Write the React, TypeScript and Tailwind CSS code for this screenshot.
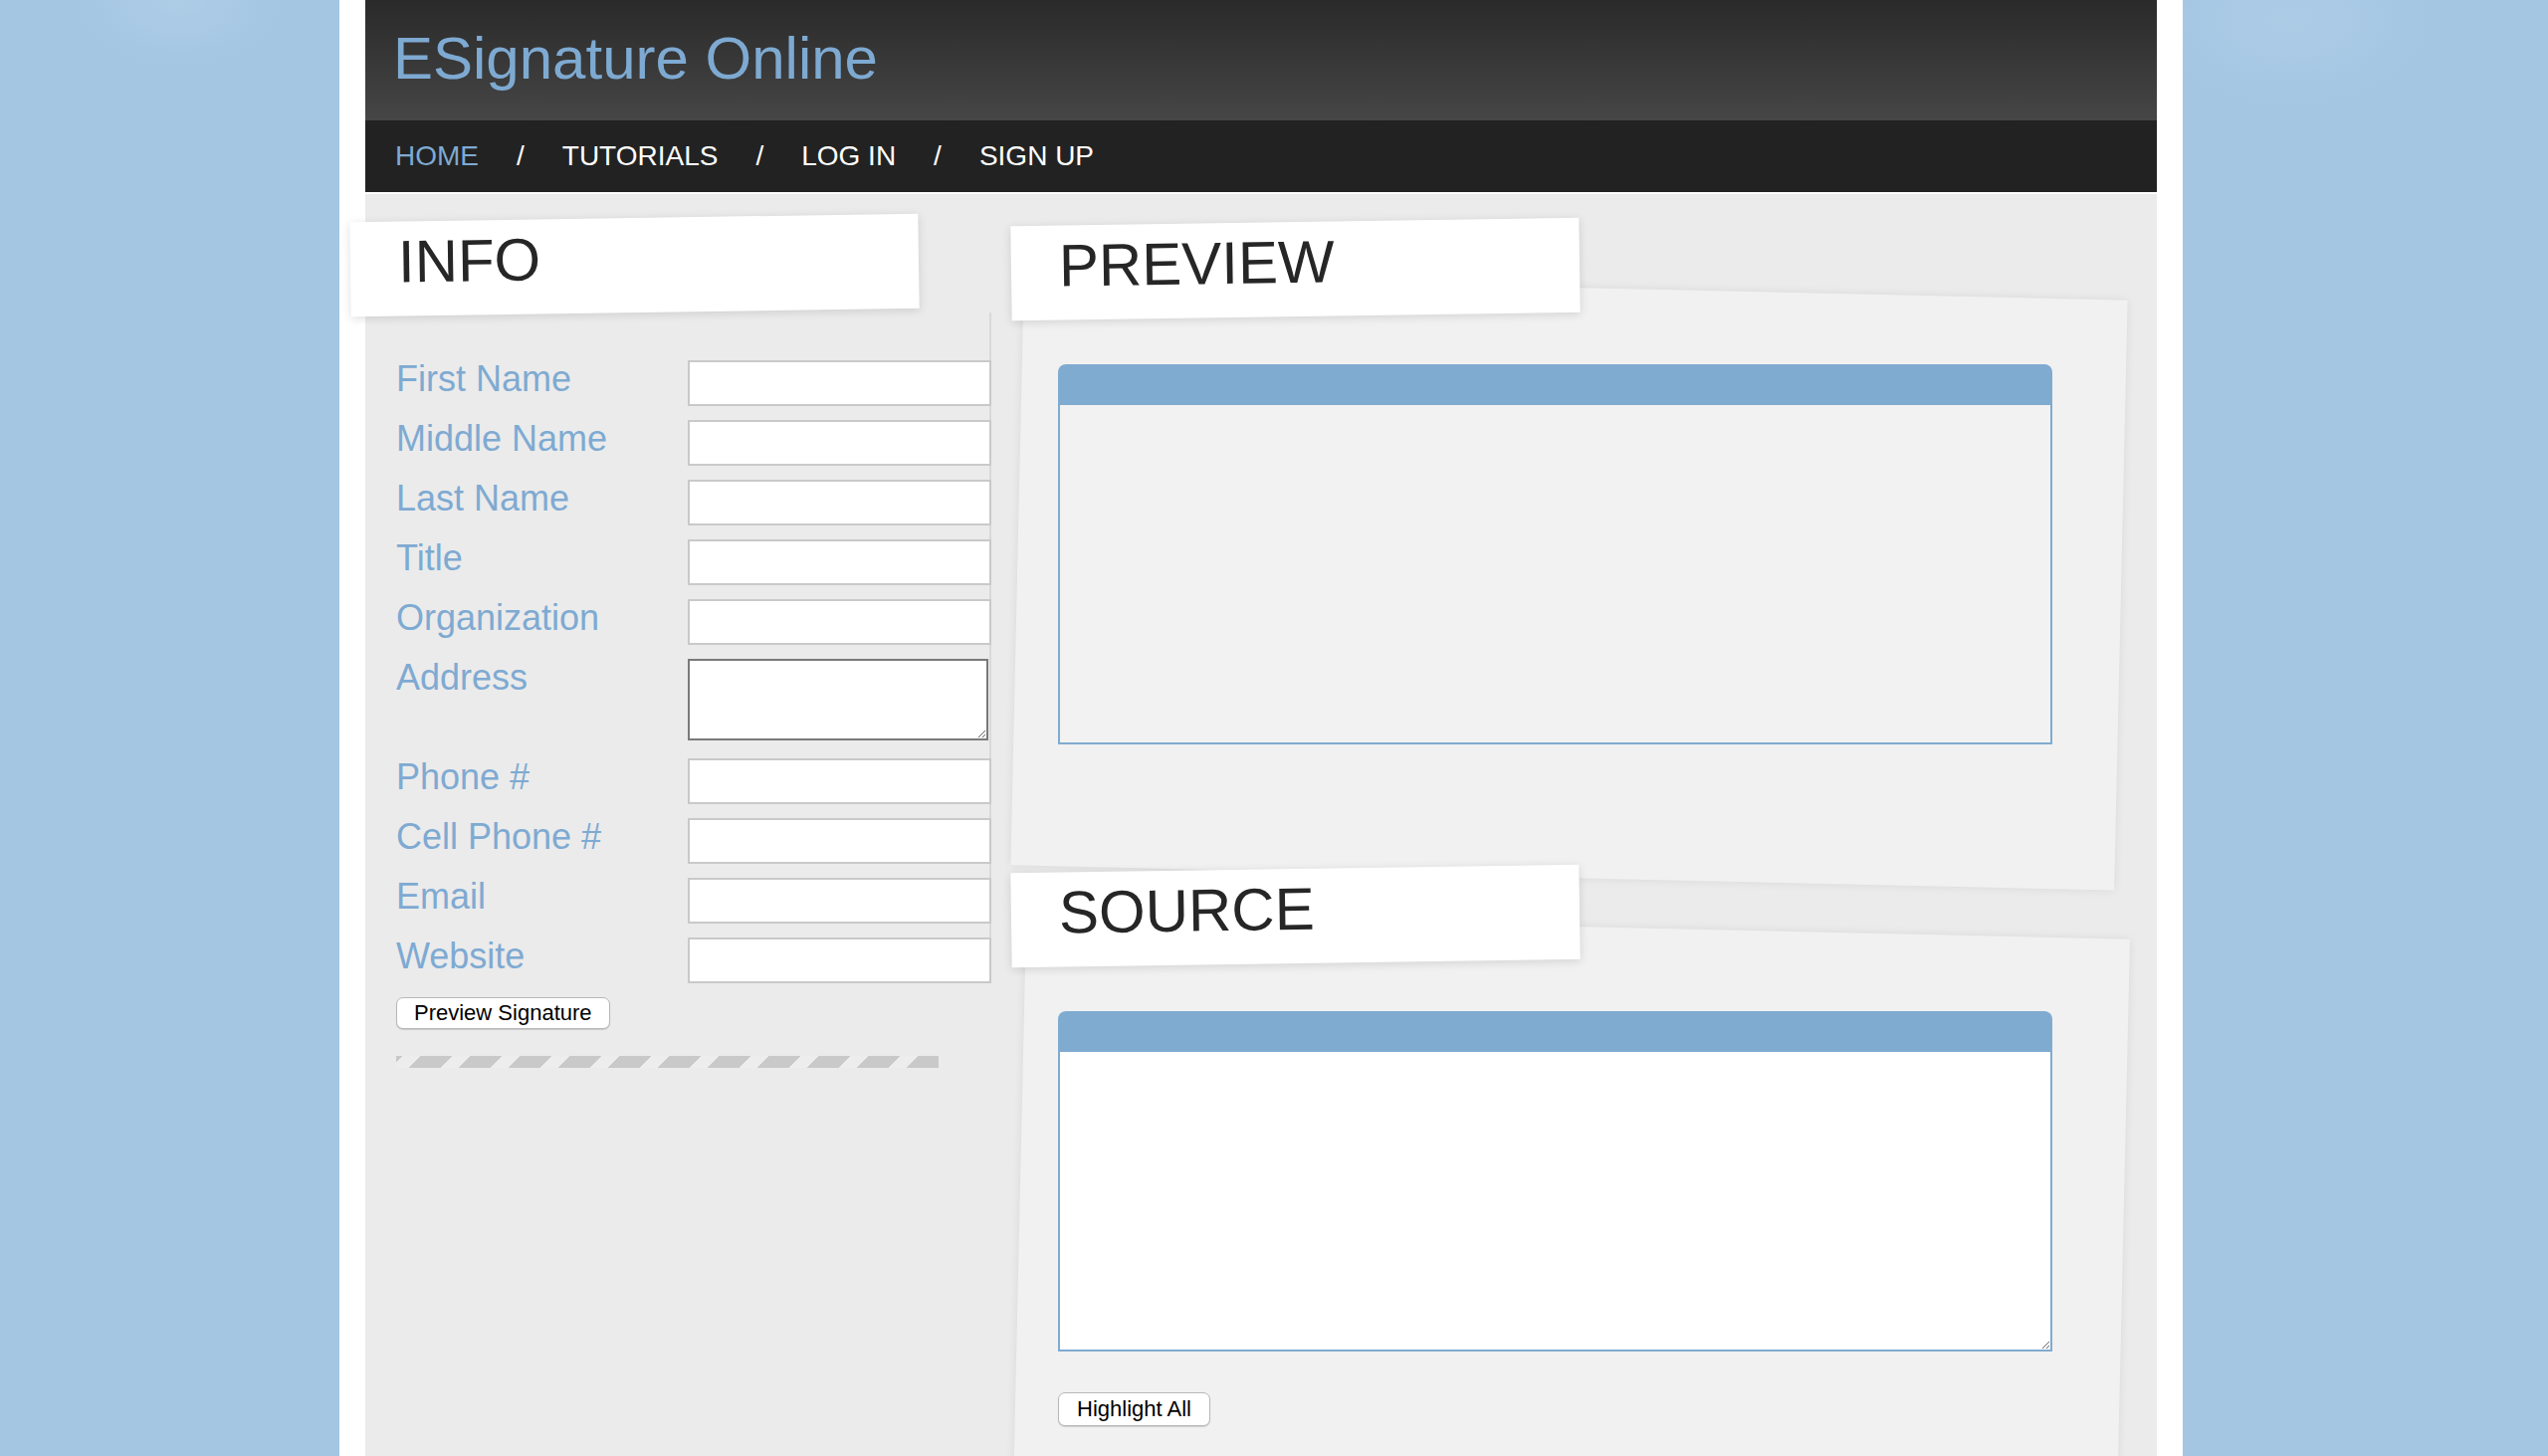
import React from "react";

const rows: { label: string; kind: "input" | "textarea" }[] = [
  { label: "First Name", kind: "input" },
  { label: "Middle Name", kind: "input" },
  { label: "Last Name", kind: "input" },
  { label: "Title", kind: "input" },
  { label: "Organization", kind: "input" },
  { label: "Address", kind: "textarea" },
  { label: "Phone #", kind: "input" },
  { label: "Cell Phone #", kind: "input" },
  { label: "Email", kind: "input" },
  { label: "Website", kind: "input" },
];

function Tag({ text, className = "" }: { text: string; className?: string }) {
  return (
    <div
      className={
        "relative z-10 w-[571px] h-[95px] bg-white rotate-[-0.85deg] shadow-[0_2px_10px_rgba(0,0,0,0.13)] pl-[48px] pt-[11px] text-[60px] leading-none text-[#262626] " +
        className
      }
    >
      {text}
    </div>
  );
}

export default function App() {
  return (
    <div className="h-screen overflow-hidden bg-[#a4c6e3] bg-[radial-gradient(ellipse_110px_70px_at_180px_0px,rgba(186,212,234,0.45),transparent),radial-gradient(ellipse_150px_90px_at_2300px_20px,rgba(186,212,234,0.4),transparent)] font-['Liberation_Sans',Arial,sans-serif]">
      <div className="ml-[341px] w-[1852px] h-full bg-white px-[26px] flex flex-col">
        <header className="h-[121px] shrink-0 bg-linear-to-b from-[#2a2a2a] to-[#464646] pl-[28px] pt-[29px]">
          <h1 className="text-[60px] leading-none text-[#7eaad2]">ESignature Online</h1>
        </header>
        <nav className="h-[72px] shrink-0 bg-[#222222] flex items-center pl-[30px] gap-[38px] text-[28px] leading-none text-white">
          <span className="text-[#7eaad2]">HOME</span>
          <span>/</span>
          <span>TUTORIALS</span>
          <span>/</span>
          <span>LOG IN</span>
          <span>/</span>
          <span>SIGN UP</span>
        </nav>
        <main className="mt-[2px] flex-1 bg-[#ebebeb] flex">
          {/* Left column */}
          <div className="w-[629px] shrink-0">
            <Tag text="INFO" className="ml-[-15px] mt-[24px] rotate-[-0.9deg]" />
            <div className="border-r-2 border-[#d9d9d9] pl-[31px] pt-[48px] flex flex-col">
              {rows.map((r, i) => (
                <div
                  key={r.label}
                  className={
                    "flex items-start " +
                    (i === rows.length - 1 ? "" : r.kind === "textarea" ? "mb-[18px]" : "mb-[14px]")
                  }
                >
                  <div className="w-[293px] shrink-0 pt-[1px] text-[36px] leading-none text-[#7eaad2]">{r.label}</div>
                  {r.kind === "input" ? (
                    <input className="w-[305px] h-[46px] shrink-0 border-2 border-[#c9c9c9] bg-white outline-none" />
                  ) : (
                    <textarea className="w-[302px] h-[82px] shrink-0 border-2 border-[#7a7a7a] bg-white outline-none" />
                  )}
                </div>
              ))}
            </div>
            <div className="pl-[31px] mt-[14px]">
              <button className="h-[32px] px-[17px] text-[22px] leading-none text-black bg-white border border-[#b8b8b8] rounded-[7px] shadow-[0_1px_1px_rgba(0,0,0,0.15)]">
                Preview Signature
              </button>
            </div>
            <div className="ml-[31px] mt-[27px] w-[545px] h-[12px] bg-[#ededed] bg-[repeating-linear-gradient(-45deg,#c9c9c9_0_23px,transparent_23px_35.36px)]" />
          </div>

          {/* Right column */}
          <div className="relative ml-[20px] w-[1130px] shrink-0 flex flex-col items-start">
            <div className="absolute left-[6px] top-[94px] w-[1109px] h-[593px] bg-[#f1f1f1] rotate-[1.3deg] shadow-[0_0_10px_rgba(0,0,0,0.08)]" />
            <div className="absolute left-[6px] top-[736px] w-[1109px] h-[800px] bg-[#f1f1f1] rotate-[1.3deg] shadow-[0_0_10px_rgba(0,0,0,0.08)]" />

            <Tag text="PREVIEW" className="mt-[28px]" />
            <div className="relative z-10 ml-[47px] mt-[48px] w-[999px]">
              <div className="h-[41px] bg-[#80abd0] rounded-t-[8px]" />
              <div className="h-[341px] border-2 border-t-0 border-[#80abd0] bg-[#f2f2f2]" />
            </div>

            <Tag text="SOURCE" className="mt-[125px]" />
            <div className="relative z-10 ml-[47px] mt-[48px] w-[999px]">
              <div className="h-[41px] bg-[#80abd0] rounded-t-[8px]" />
              <textarea className="block w-full h-[301px] border-2 border-t-0 border-[#80abd0] bg-white outline-none" />
            </div>
            <div className="relative z-10 ml-[47px] mt-[41px]">
              <button className="h-[34px] px-[18px] text-[22px] leading-none text-black bg-white border border-[#b8b8b8] rounded-[7px] shadow-[0_1px_1px_rgba(0,0,0,0.15)]">
                Highlight All
              </button>
            </div>
          </div>
        </main>
      </div>
    </div>
  );
}
